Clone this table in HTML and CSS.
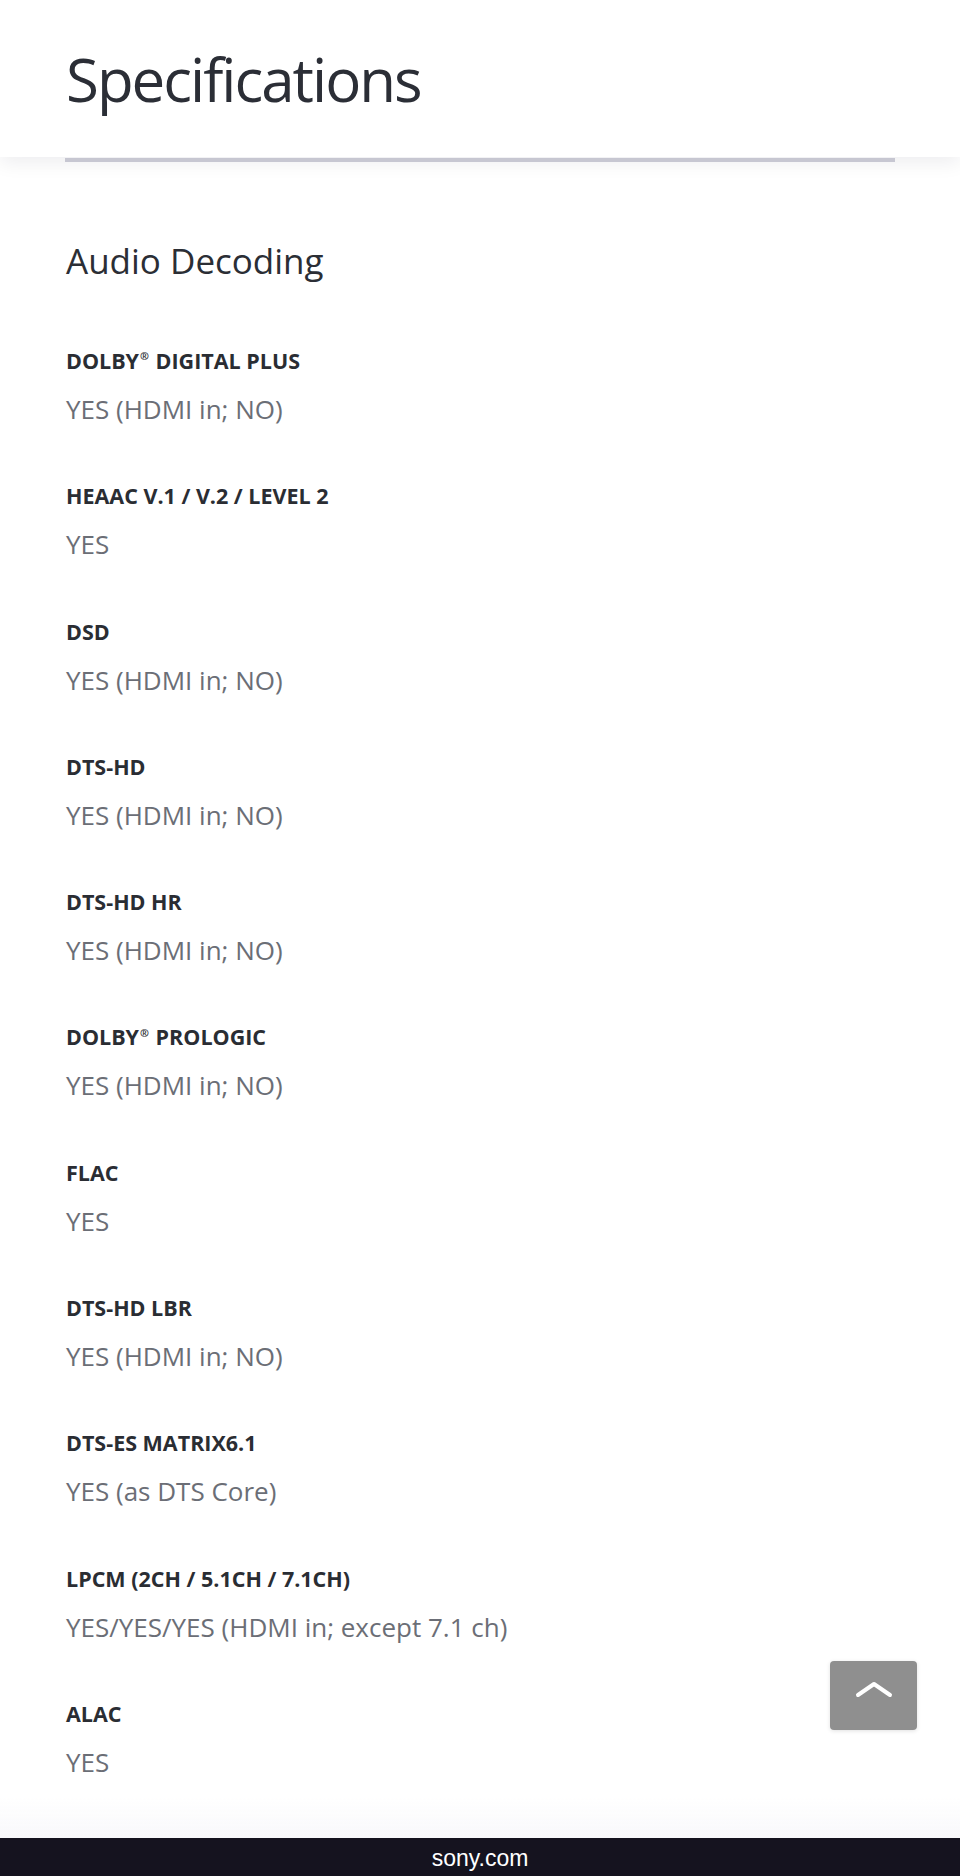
FILE: index.html
```html
<!DOCTYPE html>
<html lang="en">
<head>
  <meta charset="UTF-8">
  <meta name="viewport" content="width=device-width, initial-scale=1.0">
  <title>Specifications</title>
  <link rel="stylesheet" href="styles.css">
</head>
<body>
  <header class="page-header">
    <h1>Specifications</h1>
  </header>
  <div class="header-rule"></div>

  <section class="spec-group">
    <h2>Audio Decoding</h2>
    <dl class="spec-list">
      <div class="spec-item">
        <dt>DOLBY<span class="reg">®</span> DIGITAL PLUS</dt>
        <dd>YES (HDMI in; NO)</dd>
      </div>
      <div class="spec-item">
        <dt>HEAAC V.1 / V.2 / LEVEL 2</dt>
        <dd>YES</dd>
      </div>
      <div class="spec-item">
        <dt>DSD</dt>
        <dd>YES (HDMI in; NO)</dd>
      </div>
      <div class="spec-item">
        <dt>DTS-HD</dt>
        <dd>YES (HDMI in; NO)</dd>
      </div>
      <div class="spec-item">
        <dt>DTS-HD HR</dt>
        <dd>YES (HDMI in; NO)</dd>
      </div>
      <div class="spec-item">
        <dt>DOLBY<span class="reg">®</span> PROLOGIC</dt>
        <dd>YES (HDMI in; NO)</dd>
      </div>
      <div class="spec-item">
        <dt>FLAC</dt>
        <dd>YES</dd>
      </div>
      <div class="spec-item">
        <dt>DTS-HD LBR</dt>
        <dd>YES (HDMI in; NO)</dd>
      </div>
      <div class="spec-item">
        <dt>DTS-ES MATRIX6.1</dt>
        <dd>YES (as DTS Core)</dd>
      </div>
      <div class="spec-item">
        <dt>LPCM (2CH / 5.1CH / 7.1CH)</dt>
        <dd>YES/YES/YES (HDMI in; except 7.1 ch)</dd>
      </div>
      <div class="spec-item">
        <dt>ALAC</dt>
        <dd>YES</dd>
      </div>
    </dl>
  </section>

  <button class="back-to-top" aria-label="Back to top">
    <svg width="87" height="69" viewBox="0 0 87 69">
      <polyline points="28,34 44,23 60,34" fill="none" stroke="#fff" stroke-width="4" stroke-linecap="round" stroke-linejoin="round"/>
    </svg>
  </button>

  <div class="fade"></div>
  <footer class="url-bar">sony.com</footer>
</body>
</html>
```

FILE: styles.css
```css
body {
  margin: 0;
  padding: 0;
  background: #fff;
  font-family: "Open Sans", "Noto Sans", sans-serif;
  color: #2b2e35;
  height: 1876px;
  overflow: hidden;
}
.page-header {
  position: relative;
  z-index: 2;
  height: 157px;
  box-sizing: border-box;
  padding: 49px 66px 0;
  background: #fff;
  box-shadow: 0 6px 18px rgba(20, 20, 40, 0.07);
}
.page-header h1 {
  margin: 0;
  font-size: 60px;
  line-height: 60px;
  font-weight: 400;
  letter-spacing: -2px;
  color: #2b2e36;
}
.header-rule {
  position: relative;
  z-index: 1;
  height: 4px;
  margin: 1px 65px 0 65px;
  background: #d0d0da;
}
.spec-group {
  padding: 79px 66px 0;
}
.spec-group h2 {
  margin: 0 0 68px;
  font-size: 35px;
  line-height: 40px;
  font-weight: 400;
  color: #2b2e35;
}
.spec-list {
  margin: 0;
  display: flex;
  flex-direction: column;
  gap: 59.3px;
}
.spec-item dt {
  font-size: 21.5px;
  line-height: 24px;
  font-weight: 700;
  color: #2a2d33;
}
.spec-item dt .reg {
  font-size: 0.5em;
  line-height: 1;
  position: relative;
  top: -0.8em;
  margin: 0 1px;
}
.spec-item dd {
  margin: 20px 0 0;
  font-size: 26px;
  line-height: 32px;
  color: #6b6e76;
}
.back-to-top {
  position: fixed;
  right: 43px;
  bottom: 146px;
  width: 87px;
  height: 69px;
  padding: 0;
  border: none;
  border-radius: 4px;
  background: #8f8f8f;
  box-shadow: 0 1px 4px rgba(0, 0, 0, 0.12);
  cursor: pointer;
}
.back-to-top svg {
  display: block;
}
.fade {
  position: fixed;
  left: 0;
  right: 0;
  bottom: 38px;
  height: 40px;
  background: linear-gradient(to bottom, rgba(250, 250, 253, 0), rgba(248, 248, 251, 0.9));
}
.url-bar {
  position: fixed;
  left: 0;
  right: 0;
  bottom: 0;
  height: 38px;
  background: #15131f;
  color: #fff;
  text-align: center;
  font-family: "Liberation Sans", Arial, sans-serif;
  font-size: 23px;
  line-height: 40px;
}
```
